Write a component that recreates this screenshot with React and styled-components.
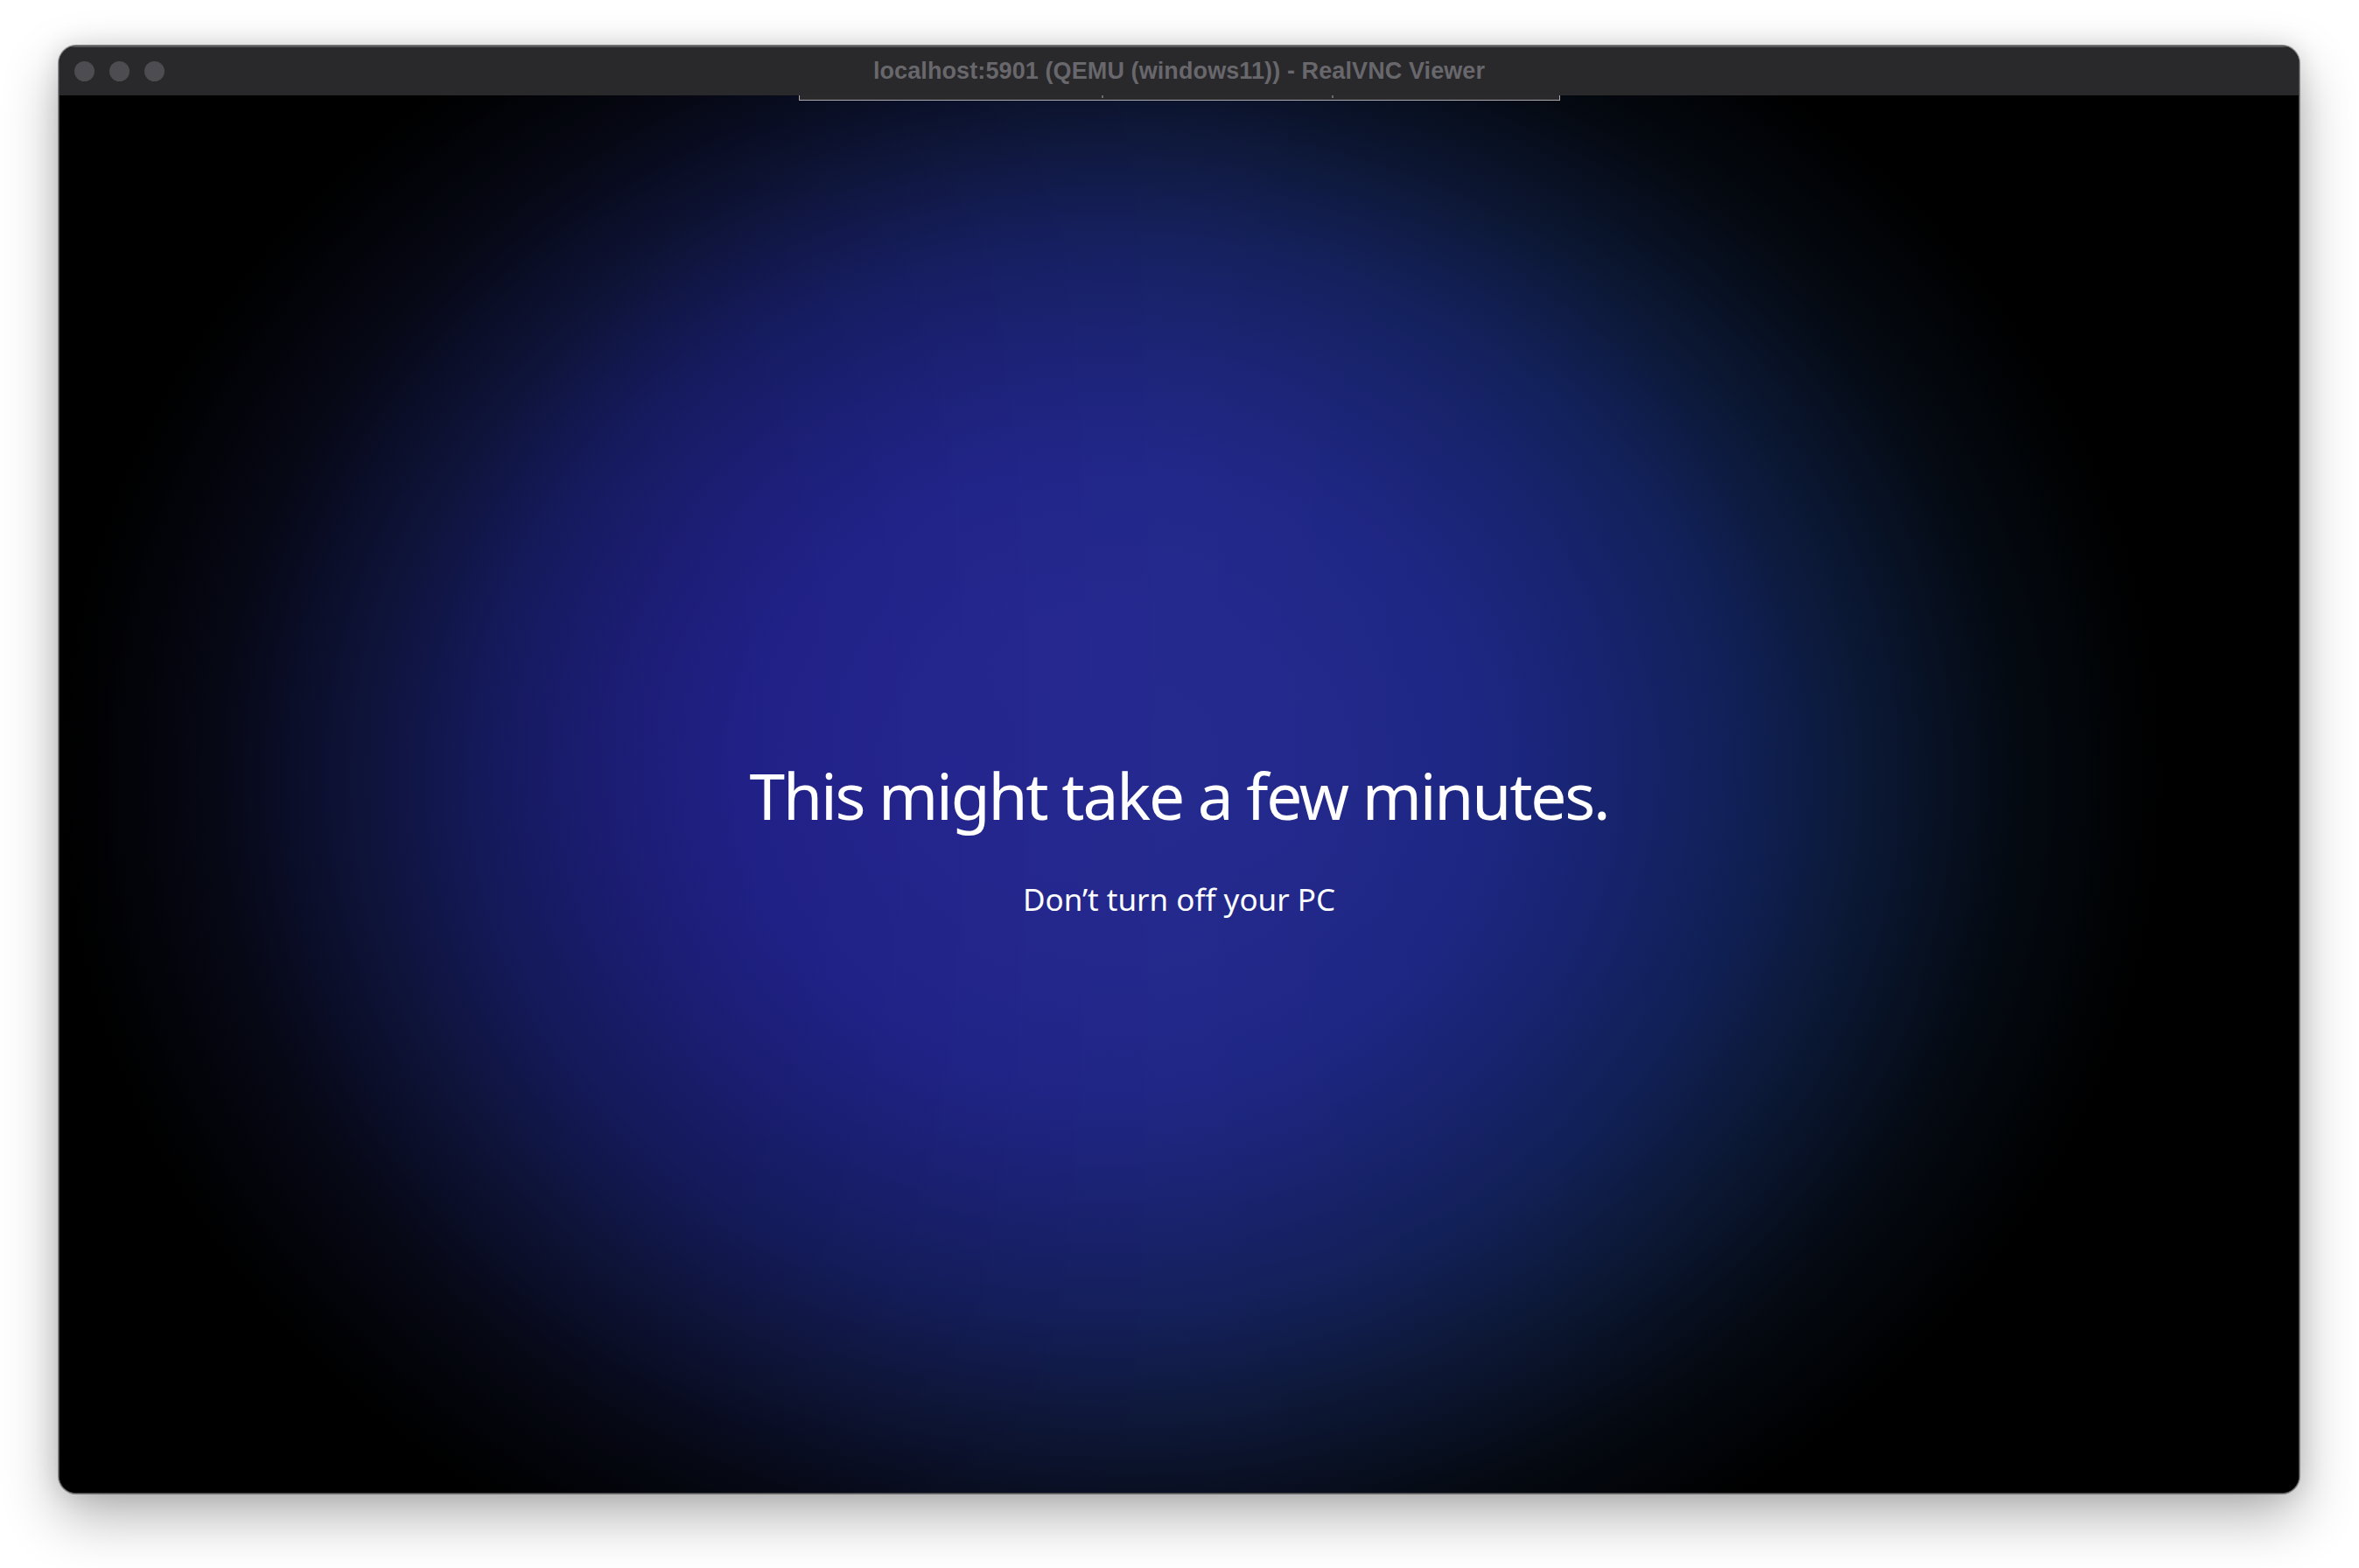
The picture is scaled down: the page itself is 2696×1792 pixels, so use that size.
// VNC viewer window showing the Windows setup "please wait" screen

import styled, { createGlobalStyle } from "styled-components";

let GlobalStyle = createGlobalStyle`
    html, body {
        margin : 0;
        padding : 0;
        background : #ffffff;
    }
    body {
        font-family : "Liberation Sans", Arial, sans-serif;
        overflow : hidden;
    }
`

let Page = styled.div`
    width : 2696px;
    height : 1792px;
    box-sizing : border-box;
    padding : 52px 68px 85px 67px;
    display : flex;
    background : #ffffff;
`

// the macOS window
let Window = styled.div`
    flex : 1;
    display : flex;
    flex-direction : column;
    border-radius : 20px;
    overflow : hidden;
    border : 1px solid #4c4b4e;
    background : #000000;
    box-shadow : 0 0 0 1px rgba(0, 0, 0, 0.35),
                 0 26px 64px rgba(0, 0, 0, 0.30),
                 0 0 28px rgba(0, 0, 0, 0.12);
`

let TitleBar = styled.div`
    height : 55px;
    flex-shrink : 0;
    display : grid;
    grid-template-columns : 1fr auto 1fr;
    align-items : center;
    background : #29282b;
    border-top : 1px solid #5f5e62;
`

let Lights = styled.div`
    display : flex;
    gap : 17px;
    padding-left : 17px;
`

let Light = styled.span`
    width : 23px;
    height : 23px;
    border-radius : 50%;
    background : #4d4c50;
`

let Title = styled.div`
    font-size : 27px;
    font-weight : bold;
    color : #68676b;
    white-space : nowrap;
    letter-spacing : 0.1px;
`

// remote desktop area; the tint layer is multiplied over the glow
let Screen = styled.div`
    flex : 1;
    display : flex;
    flex-direction : column;
    background :
        linear-gradient(90deg, rgb(255, 190, 255) 0%, rgb(255, 210, 255) 30%, #ffffff 50%, rgb(200, 255, 240) 78%, rgb(170, 255, 225) 100%),
        radial-gradient(760px 640px at 1200px 640px, rgba(40, 44, 150, 0.35), rgba(40, 44, 150, 0) 100%),
        radial-gradient(1200px 1020px at 1203px 780px,
            #24298c 0%, #23288a 20%, #1f2684 35%, #1a2370 48%,
            #14205a 60%, #0e1838 72%, #060a14 86%, #000000 100%);
    background-blend-mode : multiply, normal, normal;
`

// collapsed VNC toolbar stub under the title bar
let ToolbarStub = styled.div`
    align-self : center;
    width : 870px;
    height : 6px;
    box-sizing : border-box;
    display : flex;
    background : #2a2a2c;
    border : 1px solid #a9a9ad;
    border-top : none;
`

let StubPart = styled.div`
    width : ${(props) => props.w}px;
    border-right : ${(props) => (props.last ? "none" : "2px solid #6a6a6e")};
    height : 3px;
`

let Message = styled.div`
    flex : 1;
    display : flex;
    flex-direction : column;
    align-items : center;
    justify-content : center;
    padding-top : 93px;
    color : #ffffff;
    font-family : "Noto Sans", "Open Sans", sans-serif;
`

let Heading = styled.div`
    font-size : 73px;
    line-height : 90px;
    font-weight : 400;
    letter-spacing : -2.2px;
`

let Sub = styled.div`
    margin-top : 52px;
    font-size : 35px;
    line-height : 44px;
    letter-spacing : 0;
`

function App() {
    return (
        <Page>
            <GlobalStyle />
            <Window>
                <TitleBar>
                    <Lights>
                        <Light />
                        <Light />
                        <Light />
                    </Lights>
                    <Title>localhost:5901 (QEMU (windows11)) - RealVNC Viewer</Title>
                    <div />
                </TitleBar>
                <Screen>
                    <ToolbarStub>
                        <StubPart w={347} />
                        <StubPart w={262} />
                        <StubPart w={259} last />
                    </ToolbarStub>
                    <Message>
                        <Heading>This might take a few minutes.</Heading>
                        <Sub>Don’t turn off your PC</Sub>
                    </Message>
                </Screen>
            </Window>
        </Page>
    );
}

export default App
